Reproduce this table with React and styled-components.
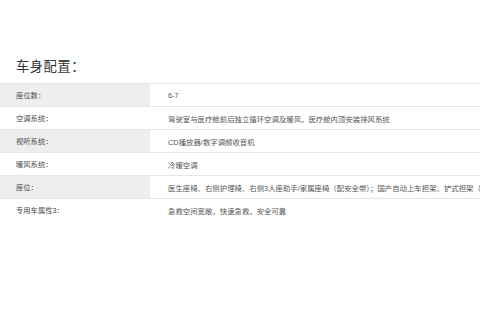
import React from "react";
import styled, { createGlobalStyle } from "styled-components";

const GlobalStyle = createGlobalStyle`
    html, body {
        margin : 0;
        padding : 0;
        background : #fff;
        overflow : hidden;
    }
    body {
        font-family : "Liberation Sans", "Noto Sans CJK SC", sans-serif;
    }
`;

const Page = styled.div`
    width : 480px;
    height : 320px;
    padding-top : 58px;
    box-sizing : border-box;
    overflow : hidden;
`;

const Title = styled.h2`
    margin : 0 0 8px 16px;
    font-size : 13.4px;
    line-height : 17px;
    font-weight : 400;
    color : #333;
    letter-spacing : 0.4px;
`;

const Table = styled.div`
    width : 100%;
    border-top : 1px solid #e6e6e6;
`;

const Row = styled.div`
    display : flex;
    height : 22px;
    border-bottom : ${props => props.last ? "none" : "1px solid #e6e6e6"};
`;

const Label = styled.div`
    flex : 0 0 150px;
    padding-left : 16px;
    box-sizing : border-box;
    display : flex;
    align-items : center;
    background-color : ${props => props.shade ? "#eeeeee" : "#fff"};
    color : #4a4a4a;
    font-size : 7.3px;
    white-space : nowrap;
`;

const Value = styled.div`
    flex : 1;
    padding-left : 18px;
    display : flex;
    align-items : center;
    color : #555;
    font-size : 7.4px;
    white-space : nowrap;
`;

const rows = [
    { label : "座位数：", value : "6-7" },
    { label : "空调系统：", value : "驾驶室与医疗舱前后独立循环空调及暖风，医疗舱内顶安装排风系统" },
    { label : "视听系统：", value : "CD播放器/数字调频收音机" },
    { label : "暖风系统：", value : "冷暖空调" },
    { label : "座位：", value : "医生座椅、右侧护理椅、右侧3人座助手/家属座椅（配安全带）；国产自动上车担架、铲式担架（含固定装置）" },
    { label : "专用车属性3：", value : "急救空间宽敞，快速急救，安全可靠" },
];

class App extends React.Component {
    render() {
        return (
            <Page>
                <GlobalStyle />
                <Title>车身配置：</Title>
                <Table>
                    {rows.map((data, i) =>
                        <Row key={i} last={i === rows.length - 1}>
                            <Label shade={i % 2 === 0}>{data.label}</Label>
                            <Value>{data.value}</Value>
                        </Row>
                    )}
                </Table>
            </Page>
        )
    }
}

export default App;
